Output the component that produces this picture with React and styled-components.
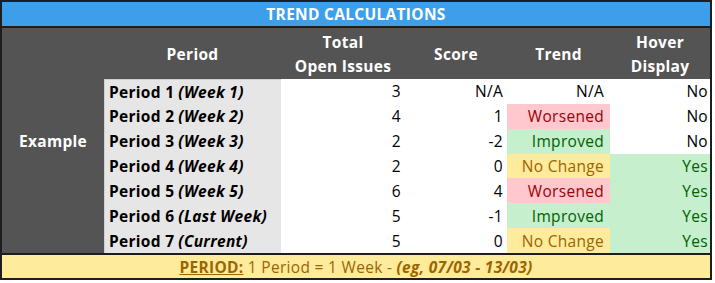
import React from "react";
import styled, { createGlobalStyle } from "styled-components";

const GlobalStyle = createGlobalStyle`
	html, body {
		margin: 0;
		padding: 0;
		background: #ffffff;
	}
	body {
		font-family: "Open Sans", "Liberation Sans", sans-serif;
	}
`;

const rows = [
	{ period: "Period 1", note: "(Week 1)", total: 3, score: "N/A", trend: "na", hover: false },
	{ period: "Period 2", note: "(Week 2)", total: 4, score: 1, trend: "worse", hover: false },
	{ period: "Period 3", note: "(Week 3)", total: 2, score: -2, trend: "better", hover: false },
	{ period: "Period 4", note: "(Week 4)", total: 2, score: 0, trend: "same", hover: true },
	{ period: "Period 5", note: "(Week 5)", total: 6, score: 4, trend: "worse", hover: true },
	{ period: "Period 6", note: "(Last Week)", total: 5, score: -1, trend: "better", hover: true },
	{ period: "Period 7", note: "(Current)", total: 5, score: 0, trend: "same", hover: true },
];

const trendLabels = {
	na: "N/A",
	worse: "Worsened",
	better: "Improved",
	same: "No Change",
};

const tones = {
	plain: { bg: "#ffffff", fg: "#000000" },
	worse: { bg: "#ffc7ce", fg: "#9c0006" },
	better: { bg: "#c6efce", fg: "#006100" },
	same: { bg: "#ffeb9c", fg: "#9c6500" },
};

const App = () => {
	return (
		<>
			<GlobalStyle />
			<Frame>
				<Title>TREND CALCULATIONS</Title>
				<Grid>
					<ExampleCell>Example</ExampleCell>
					<HeadCell>Period</HeadCell>
					<HeadCell>
						Total
						<br />
						Open Issues
					</HeadCell>
					<HeadCell>Score</HeadCell>
					<HeadCell>Trend</HeadCell>
					<HeadCell>
						Hover
						<br />
						Display
					</HeadCell>

					{rows.map((row, i) => (
						<React.Fragment key={row.period}>
							<PeriodCell first={i === 0}>
								{row.period} <em>{row.note}</em>
							</PeriodCell>
							<NumberCell>{row.total}</NumberCell>
							<NumberCell>{row.score}</NumberCell>
							<TrendCell tone={row.trend === "na" ? "plain" : row.trend}>
								{trendLabels[row.trend]}
							</TrendCell>
							<HoverCell tone={row.hover ? "better" : "plain"}>
								{row.hover ? "Yes" : "No"}
							</HoverCell>
						</React.Fragment>
					))}
				</Grid>
				<Footer>
					<FooterLabel>PERIOD:</FooterLabel>
					&nbsp;1 Period = 1 Week -&nbsp;
					<FooterNote>(eg, 07/03 - 13/03)</FooterNote>
				</Footer>
			</Frame>
		</>
	);
};

const Frame = styled.div`
	width: 712px;
	box-sizing: border-box;
	border: 2px solid #1e1e1e;
	display: flex;
	flex-direction: column;
	font-size: 15.5px;
	letter-spacing: 0.3px;
`;

const Title = styled.div`
	height: 24px;
	background-color: #3d9fe9;
	border-bottom: 2px solid #1e1e1e;
	color: #ffffff;
	font-weight: 700;
	display: flex;
	align-items: center;
	justify-content: center;
`;

const Grid = styled.div`
	display: grid;
	grid-template-columns: 102px 177px 124px 102px 103px 100px;
	grid-template-rows: 51px repeat(7, 1fr);
	height: 225px;
	background-color: #545454;
`;

const HeadCell = styled.div`
	color: #ffffff;
	font-weight: 700;
	line-height: 24px;
	display: flex;
	align-items: center;
	justify-content: center;
	text-align: center;
`;

const ExampleCell = styled.div`
	grid-column: 1;
	grid-row: 1 / span 8;
	color: #ffffff;
	font-weight: 700;
	display: flex;
	align-items: center;
	justify-content: center;
`;

const BodyCell = styled.div`
	display: flex;
	align-items: center;
	background-color: #ffffff;
	color: #000000;
	white-space: nowrap;
`;

const PeriodCell = styled(BodyCell)`
	background-color: #e6e6e6;
	border-left: 1px solid #cfcfcf;
	border-top: ${(p) => (p.first ? "1px solid #cfcfcf" : "none")};
	padding-left: 4px;
	font-weight: 700;

	em {
		margin-left: 4px;
		font-style: italic;
	}
`;

const NumberCell = styled(BodyCell)`
	justify-content: flex-end;
	padding-right: 4px;
`;

const TrendCell = styled(BodyCell)`
	justify-content: flex-end;
	padding-right: 6px;
	background-color: ${(p) => tones[p.tone].bg};
	color: ${(p) => tones[p.tone].fg};
`;

const HoverCell = styled(BodyCell)`
	justify-content: flex-end;
	padding-right: 2px;
	background-color: ${(p) => tones[p.tone].bg};
	color: ${(p) => tones[p.tone].fg};
`;

const Footer = styled.div`
	height: 23px;
	border-top: 2px solid #1e1e1e;
	background-color: #ffeb9c;
	color: #9c6500;
	display: flex;
	align-items: center;
	justify-content: center;
	white-space: pre;
`;

const FooterLabel = styled.span`
	font-weight: 700;
	text-decoration: underline;
`;

const FooterNote = styled.span`
	font-weight: 700;
	font-style: italic;
`;

export default App;
